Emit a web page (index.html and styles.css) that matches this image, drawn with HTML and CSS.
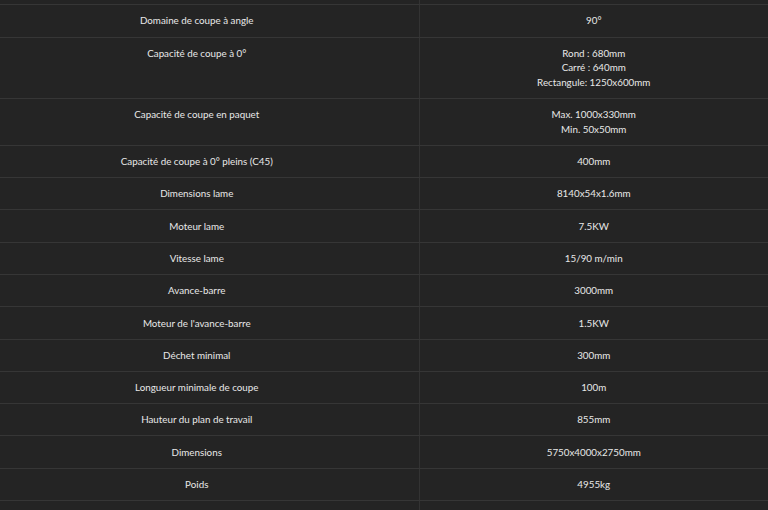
FILE: index.html
```html
<!DOCTYPE html>
<html lang="fr">
<head>
<meta charset="utf-8">
<title>Caractéristiques</title>
<link rel="stylesheet" href="styles.css">
</head>
<body>
<div class="wrap">
<table class="specs">
<tbody>
<tr class="prev"><td class="k"></td><td class="v"></td></tr>
<tr><td class="k">Domaine de coupe à angle</td><td class="v">90°</td></tr>
<tr><td class="k">Capacité de coupe à 0°</td><td class="v">Rond : 680mm<br>Carré : 640mm<br>Rectangule: 1250x600mm</td></tr>
<tr><td class="k">Capacité de coupe en paquet</td><td class="v">Max. 1000x330mm<br>Min. 50x50mm</td></tr>
<tr><td class="k">Capacité de coupe à 0° pleins (C45)</td><td class="v">400mm</td></tr>
<tr><td class="k">Dimensions lame</td><td class="v">8140x54x1.6mm</td></tr>
<tr><td class="k">Moteur lame</td><td class="v">7.5KW</td></tr>
<tr><td class="k">Vitesse lame</td><td class="v">15/90 m/min</td></tr>
<tr><td class="k">Avance-barre</td><td class="v">3000mm</td></tr>
<tr><td class="k">Moteur de l'avance-barre</td><td class="v">1.5KW</td></tr>
<tr><td class="k">Déchet minimal</td><td class="v">300mm</td></tr>
<tr><td class="k">Longueur minimale de coupe</td><td class="v">100m</td></tr>
<tr><td class="k">Hauteur du plan de travail</td><td class="v">855mm</td></tr>
<tr><td class="k">Dimensions</td><td class="v">5750x4000x2750mm</td></tr>
<tr><td class="k">Poids</td><td class="v">4955kg</td></tr>
<tr class="next"><td class="k"></td><td class="v"></td></tr>
</tbody>
</table>
</div>
</body>
</html>
```
FILE: styles.css
```css
html, body {
  margin: 0;
  padding: 0;
  background: #242424;
  overflow: hidden;
}
.wrap {
  width: 768px;
  height: 510px;
  overflow: hidden;
}
.specs {
  width: 768px;
  border-collapse: collapse;
  table-layout: fixed;
  margin-top: -28px;
  font-family: Lato, "Open Sans", sans-serif;
  font-size: 9.8px;
  line-height: 14.6px;
  color: #e8e8e8;
}
.specs td {
  text-align: center;
  vertical-align: top;
  padding: 8.2px 8px 8.5px;
  border-top: 1px solid #363636;
  border-bottom: 1px solid #363636;
  height: 14.6px;
}
.specs td.k {
  width: 419px;
  box-sizing: border-box;
  padding-right: 33px;
}
.specs td.v {
  border-left: 1px solid #333333;
}
```
